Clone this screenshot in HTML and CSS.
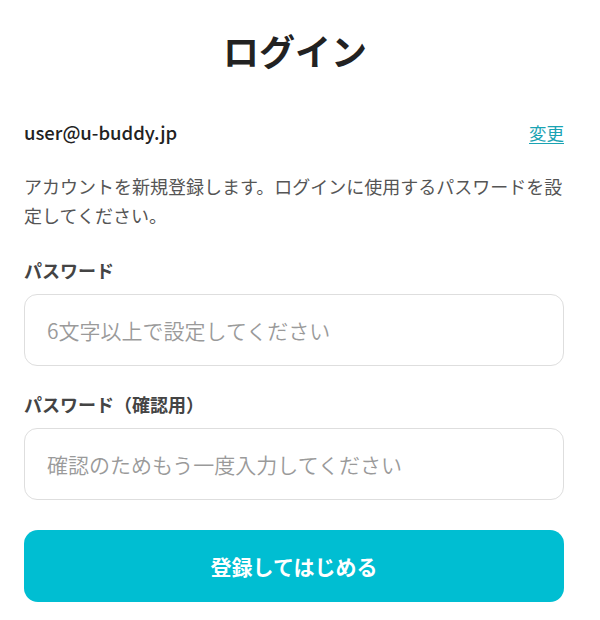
FILE: index.html
```html
<!DOCTYPE html>
<html lang="ja">
<head>
<meta charset="utf-8">
<link rel="stylesheet" href="styles.css">
</head>
<body>
<main class="page">
  <h1 class="title">ログイン</h1>
  <div class="account">
    <span class="email">user@u-buddy.jp</span>
    <a class="change" href="#">変更</a>
  </div>
  <p class="desc">アカウントを新規登録します。ログインに使用するパスワードを設定してください。</p>
  <label class="label" for="pw">パスワード</label>
  <input class="input" id="pw" type="password" placeholder="6文字以上で設定してください">
  <label class="label" for="pw2">パスワード（確認用）</label>
  <input class="input" id="pw2" type="password" placeholder="確認のためもう一度入力してください">
  <button class="submit" type="button">登録してはじめる</button>
</main>
</body>
</html>
```

FILE: styles.css
```css
* { box-sizing: border-box; }
html, body { margin: 0; padding: 0; background: #fff; }
body {
  font-family: "Noto Sans CJK JP", "Noto Sans", sans-serif;
  color: #222;
}
.page {
  width: 540px;
  margin-left: 24px;
  display: flex;
  flex-direction: column;
}
.title {
  margin: 24px 0 0;
  text-align: center;
  font-size: 36px;
  line-height: 52px;
  font-weight: 700;
  color: #222;
  padding-left: 2px;
}
.account {
  margin-top: 41px;
  display: flex;
  justify-content: space-between;
  align-items: center;
  height: 30px;
}
.email {
  font-family: "Noto Sans CJK JP", sans-serif;
  font-size: 18.5px;
  font-weight: 500;
  color: #222;
}
.change {
  font-size: 17.5px;
  color: #1aa3b3;
  text-decoration: underline;
  text-underline-offset: 3px;
}
.desc {
  margin: 25px 0 0;
  font-size: 18px;
  line-height: 29px;
  color: #555;
}
.label {
  margin-top: 28px;
  font-size: 18px;
  line-height: 24px;
  font-weight: 700;
  color: #444;
}
.input {
  margin-top: 12px;
  height: 72px;
  width: 100%;
  border: 1px solid #dedede;
  border-radius: 13px;
  padding: 0 22px;
  font-family: "Noto Sans CJK JP", sans-serif;
  font-size: 21px;
  color: #333;
  outline: none;
}
.input::placeholder { color: #9a9a9a; font-weight: 350; }
.input + .label { margin-top: 26px; }
.submit {
  margin-top: 30px;
  height: 72px;
  width: 100%;
  border: none;
  border-radius: 14px;
  background: #00bed2;
  color: #fff;
  font-family: "Noto Sans CJK JP", sans-serif;
  font-size: 21px;
  font-weight: 700;
}
```
